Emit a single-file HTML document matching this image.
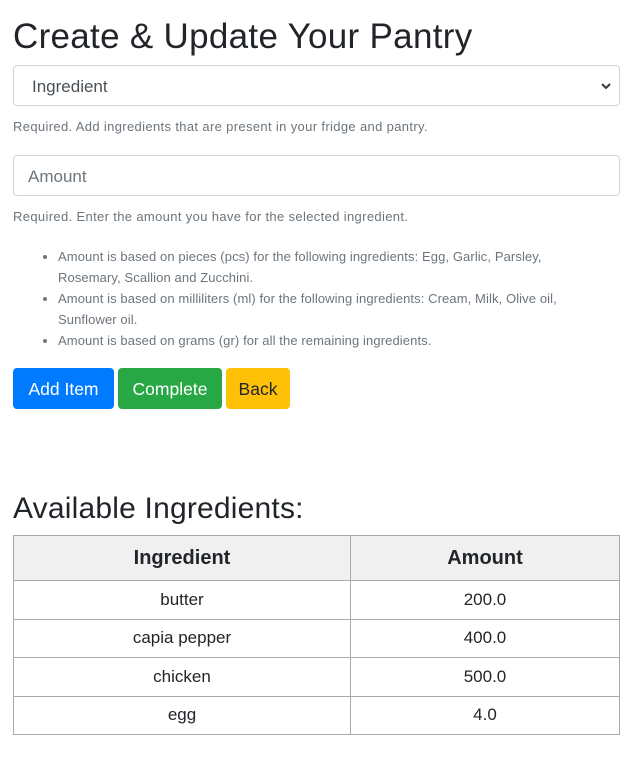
<!DOCTYPE html>
<html><head><meta charset="utf-8"><style>
body{margin:0;background:#fff;font-family:"Liberation Sans",sans-serif;color:#212529;width:636px;height:766px;overflow:hidden;position:relative}
.a{position:absolute}
h1{position:absolute;left:13px;top:15px;margin:0;font-size:35px;font-weight:500;line-height:44px;letter-spacing:0.3px}
.box{position:absolute;left:13px;width:605px;height:39px;border:1px solid #ced4da;border-radius:4px;font-size:17px;line-height:41px;color:#495057}
.help{position:absolute;left:13px;font-size:13px;color:#6c757d;letter-spacing:0.35px}
ul{position:absolute;left:0;top:246px;margin:0;padding-left:58px;font-size:13px;line-height:21px;color:#6c757d;width:520px;letter-spacing:0.1px}
.btn{position:absolute;top:368px;height:41px;line-height:43px;border-radius:4px;font-size:17.5px;text-align:center;color:#fff}
h2{position:absolute;left:13px;top:489px;margin:0;font-size:30px;font-weight:500;line-height:40px;letter-spacing:0.2px}
table{position:absolute;left:13px;top:535px;width:607px;border-collapse:collapse;font-size:17px}
td,th{border:1px solid #aaa;text-align:center;padding:0}
th{background:#f0f0f0;height:44px;font-size:20px}
td{height:37.5px}
</style></head><body>
<h1>Create &amp; Update Your Pantry</h1>
<div class="box" style="top:65px;height:39px"><span style="padding-left:18px">Ingredient</span><svg class="a" style="right:8px;top:16px" width="10" height="8" viewBox="0 0 10 8"><path d="M1 2l4 4 4-4" stroke="#343a40" stroke-width="2" fill="none"/></svg></div>
<div class="help" style="top:119px">Required. Add ingredients that are present in your fridge and pantry.</div>
<div class="box" style="top:155px;color:#6c757d"><span style="padding-left:14px">Amount</span></div>
<div class="help" style="top:209px">Required. Enter the amount you have for the selected ingredient.</div>
<ul>
<li>Amount is based on pieces (pcs) for the following ingredients: Egg, Garlic, Parsley, Rosemary, Scallion and Zucchini.</li>
<li>Amount is based on milliliters (ml) for the following ingredients: Cream, Milk, Olive oil, Sunflower oil.</li>
<li>Amount is based on grams (gr) for all the remaining ingredients.</li>
</ul>
<div class="btn" style="left:13px;width:101px;background:#007bff">Add Item</div>
<div class="btn" style="left:118px;width:104px;background:#28a745">Complete</div>
<div class="btn" style="left:226px;width:64px;background:#ffc107;color:#212529">Back</div>
<h2>Available Ingredients:</h2>
<table>
<tr><th style="width:336px">Ingredient</th><th>Amount</th></tr>
<tr><td>butter</td><td>200.0</td></tr>
<tr><td>capia pepper</td><td>400.0</td></tr>
<tr><td>chicken</td><td>500.0</td></tr>
<tr><td>egg</td><td>4.0</td></tr>
</table>
</body></html>
